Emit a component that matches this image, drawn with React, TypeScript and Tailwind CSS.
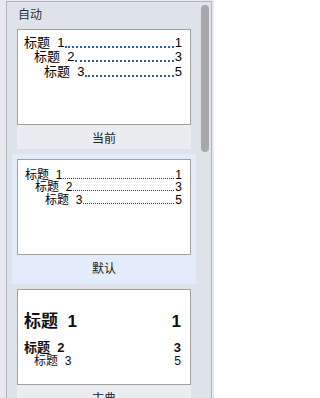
import React from 'react';

type Row = { title: string; page: string; indent: string };

const font = "font-['Liberation_Sans','Noto_Sans_CJK_SC',sans-serif]";

const AutoPreview: React.FC = () => {
  const rows: Row[] = [
    { title: '标题  1', page: '1', indent: 'pl-0' },
    { title: '标题  2', page: '3', indent: 'pl-[10px]' },
    { title: '标题  3', page: '5', indent: 'pl-[20px]' },
  ];
  return (
    <div className="pt-[5px] pl-[6px] pr-[8px] flex flex-col">
      {rows.map((r) => (
        <div key={r.title} className={`flex items-end h-[14.5px] text-[13px] leading-[14px] text-black ${r.indent}`}>
          <span className="whitespace-pre shrink-0">{r.title}</span>
          {/* leader */}
          <span className="flex-1 min-w-0 mx-[1px] mb-[2px] border-b-2 border-dotted border-[#2a62a8]" />
          <span className="shrink-0">{r.page}</span>
        </div>
      ))}
    </div>
  );
};

const DefaultPreview: React.FC = () => {
  const rows: Row[] = [
    { title: '标题  1', page: '1', indent: 'pl-[1px]' },
    { title: '标题  2', page: '3', indent: 'pl-[11px]' },
    { title: '标题  3', page: '5', indent: 'pl-[21px]' },
  ];
  return (
    <div className="pt-[8px] pl-[6px] pr-[8px] flex flex-col">
      {rows.map((r) => (
        <div key={r.title} className={`flex items-end h-[12.5px] text-[12px] leading-[12px] text-black ${r.indent}`}>
          <span className="whitespace-pre shrink-0">{r.title}</span>
          <span className="flex-1 min-w-0 mx-[1px] mb-[2px] border-b border-dotted border-[#333]" />
          <span className="shrink-0">{r.page}</span>
        </div>
      ))}
    </div>
  );
};

const ClassicPreview: React.FC = () => (
  <div className="pt-[23px] pl-[6px] pr-[9px] flex flex-col text-[#111]">
    <div className="flex justify-between items-center text-[17px] leading-[18px] font-bold">
      <span className="whitespace-pre">标题  1</span>
      <span>1</span>
    </div>
    <div className="flex justify-between items-center mt-[10px] text-[13px] leading-[13px] font-bold">
      <span className="whitespace-pre">标题  2</span>
      <span>3</span>
    </div>
    <div className="flex justify-between items-center mt-[1px] text-[12px] leading-[13px] pl-[10px]">
      <span className="whitespace-pre">标题  3</span>
      <span>5</span>
    </div>
  </div>
);

const GalleryItem: React.FC<{ label: string; selected?: boolean; children: React.ReactNode }> = ({ label, selected, children }) => (
  <div className={`ml-[5px] mr-[1px] p-[5px] shrink-0 ${selected ? 'bg-[#e3ecfb]' : ''}`}>
    <div className="h-[96px] bg-white border border-[#a0a0a0] overflow-hidden">{children}</div>
    <div className={`h-[24px] flex items-center justify-center pt-[3px] text-[12px] text-[#222] ${selected ? '' : 'bg-[#ebecef]'}`}>
      {label}
    </div>
  </div>
);

export default function App() {
  return (
    <div className={`w-[214px] h-[398px] overflow-hidden bg-[#e6e8ed] pl-[6px] pt-[1px] pr-[2px] ${font}`}>
      <div className="h-[420px] flex border-l border-t border-r border-[#b0b4bc] bg-[#dee2e9]">
        {/* gallery column */}
        <div className="w-[190px] flex flex-col">
          <div className="h-[22px] pl-[11px] pt-[6px] text-[12px] leading-[14px] text-[#333]">自动</div>
          <GalleryItem label="当前">
            <AutoPreview />
          </GalleryItem>
          <GalleryItem label="默认" selected>
            <DefaultPreview />
          </GalleryItem>
          <GalleryItem label="古典">
            <ClassicPreview />
          </GalleryItem>
        </div>
        {/* scrollbar */}
        <div className="flex-1 flex justify-center pt-[3px] pl-[1px]">
          <div className="w-[8px] h-[147px] rounded-full bg-[#a7a8ac]" />
        </div>
      </div>
    </div>
  );
}
